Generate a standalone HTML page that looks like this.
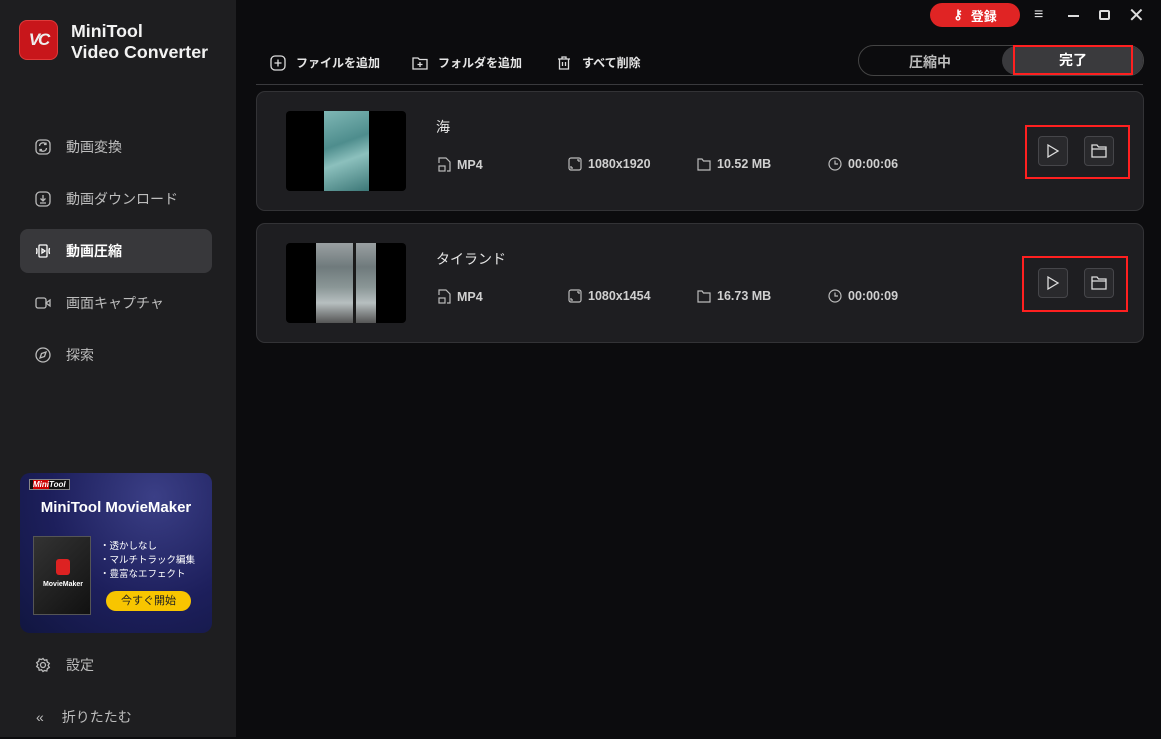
<!DOCTYPE html>
<html><head><meta charset="utf-8"><style>
*{margin:0;padding:0;box-sizing:border-box}
body{width:1161px;height:737px;background:#0c0c0e;font-family:"Liberation Sans","Noto Sans CJK JP",sans-serif;color:#ddd;position:relative;overflow:hidden;font-size:13px}
.side{position:absolute;left:0;top:0;width:236px;height:737px;background:#1e1e20}
.logo{position:absolute;left:19px;top:20px;width:39px;height:40px;border-radius:8px;background:#c8161b;border:1px solid #e03a3a;color:#eee;font-weight:bold;font-style:italic;font-size:17px;text-align:center;line-height:38px;letter-spacing:-2px}
.title{position:absolute;left:71px;top:21px;font-weight:bold;font-size:17.8px;line-height:21px;color:#f2f2f2}
.nav{position:absolute;left:20px;width:192px;height:44px;border-radius:8px;display:flex;align-items:center;font-size:14px;color:#bdbdbd}
.nav.act{background:#38383b;color:#fff;font-weight:bold}
.nav svg{margin-left:15px;margin-right:15px}
.ad{position:absolute;left:20px;top:473px;width:192px;height:160px;border-radius:10px;background:radial-gradient(ellipse at 70% 15%,#3b3f86,#1d1f5c 55%,#111640);overflow:hidden}
.main .tb{position:absolute;top:54px;display:flex;align-items:center;font-size:12px;color:#e6e6e6;font-weight:bold}
.tb svg{margin-right:10px}
.card{position:absolute;left:256px;width:888px;height:120px;background:#1e1e21;border:1px solid #333336;border-radius:9px}
.thumb{position:absolute;left:29px;top:19px;width:120px;height:80px;background:#000;border-radius:4px;overflow:hidden}
.name{position:absolute;left:179px;top:25px;font-size:14px;color:#e5e5e5}
.meta{position:absolute;top:65px;display:flex;align-items:center;font-size:12.5px;color:#d0d0d0;font-weight:bold}
.meta svg{margin-right:6px}
.btn{position:absolute;width:30px;height:30px;border:1px solid #46464a;border-radius:4px;background:#29292c;display:flex;align-items:center;justify-content:center}
.red{position:absolute;border:2px solid #ff2020}
</style></head><body>
<div class="side">
 <div class="logo">VC</div>
 <div class="title">MiniTool<br>Video Converter</div>
 <div class="nav" style="top:125px"><svg width="16" height="16" viewBox="0 0 16 16" fill="none" stroke="#bbb" stroke-width="1.3"><rect x="1" y="1" width="14" height="14" rx="4"/><path d="M4.5 7a3.5 3.5 0 0 1 6.5-1.5M11.5 9a3.5 3.5 0 0 1-6.5 1.5M11 3.5v2H9M5 12.5v-2h2"/></svg>動画変換</div>
 <div class="nav" style="top:177px"><svg width="16" height="16" viewBox="0 0 16 16" fill="none" stroke="#bbb" stroke-width="1.3"><rect x="1" y="1" width="14" height="14" rx="4"/><path d="M8 4v6M5.5 7.5 8 10l2.5-2.5M5 12h6"/></svg>動画ダウンロード</div>
 <div class="nav act" style="top:229px"><svg width="16" height="16" viewBox="0 0 16 16" fill="none" stroke="#fff" stroke-width="1.3"><rect x="4" y="2" width="8" height="12" rx="1"/><path d="M7 6v4l3-2zM1.5 5q1 3 0 6M14.5 5q-1 3 0 6"/></svg>動画圧縮</div>
 <div class="nav" style="top:281px"><svg width="16" height="16" viewBox="0 0 16 16" fill="none" stroke="#bbb" stroke-width="1.3"><rect x="1" y="3" width="10" height="10" rx="2"/><path d="M11 8l4-3v6z"/></svg>画面キャプチャ</div>
 <div class="nav" style="top:333px"><svg width="16" height="16" viewBox="0 0 16 16" fill="none" stroke="#bbb" stroke-width="1.3"><circle cx="8" cy="8" r="7"/><path d="M11 5 9.5 9.5 5 11 6.5 6.5z"/></svg>探索</div>
 <div class="ad">
  <div style="position:absolute;left:9px;top:6px;background:#111;border:1px solid #888;color:#fff;font-size:8px;font-weight:bold;font-style:italic;padding:0 3px;line-height:9px"><span style="background:#c00">Mini</span>Tool</div>
  <div style="position:absolute;left:0;width:192px;top:26px;text-align:center;color:#fff;font-weight:bold;font-size:15px">MiniTool MovieMaker</div>
  <div style="position:absolute;left:13px;top:63px;width:58px;height:79px;background:linear-gradient(135deg,#333,#111);border:1px solid #555"><div style="position:absolute;left:22px;top:22px;width:14px;height:16px;background:#d22;border-radius:3px"></div><div style="position:absolute;left:0;width:58px;top:44px;text-align:center;font-size:7px;color:#fff;font-weight:bold">MovieMaker</div></div>
  <div style="position:absolute;left:80px;top:67px;color:#fff;font-size:9.5px;line-height:14px">・透かしなし<br>・マルチトラック編集<br>・豊富なエフェクト</div>
  <div style="position:absolute;left:86px;top:118px;width:85px;height:20px;border-radius:10px;background:#f8c500;color:#222;font-size:11px;text-align:center;line-height:20px">今すぐ開始</div>
 </div>
 <div class="nav" style="top:643px"><svg width="16" height="16" viewBox="0 0 16 16" fill="none" stroke="#bbb" stroke-width="1.3"><circle cx="8" cy="8" r="2.5"/><path d="M8 1.5l1.5 1.8 2.3-.5.5 2.3 2 1.3-1.2 2 1.2 2-2 1.3-.5 2.3-2.3-.5L8 14.5l-1.5-1.8-2.3.5-.5-2.3-2-1.3 1.2-2-1.2-2 2-1.3.5-2.3 2.3.5z"/></svg>設定</div>
 <div class="nav" style="top:695px"><span style="margin-left:16px;margin-right:18px;font-size:14px">«</span>折りたたむ</div>
</div>

<div class="main">
 <div style="position:absolute;left:930px;top:3px;width:90px;height:24px;border-radius:12px;background:#e02424;color:#fff;font-size:13px;font-weight:bold;display:flex;align-items:center;justify-content:center"><span style="margin-right:8px">⚷</span>登録</div>
 <div style="position:absolute;left:1034px;top:6px;color:#ddd;font-size:16px">≡</div>
 <div style="position:absolute;left:1068px;top:15px;width:11px;height:2px;background:#ddd"></div>
 <div style="position:absolute;left:1099px;top:10px;width:11px;height:10px;border:2px solid #ddd;border-radius:2px"></div>
 <div style="position:absolute;left:1128px;top:3px;color:#ddd;font-size:20px">✕</div>

 <div class="tb" style="left:270px"><svg width="16" height="16" viewBox="0 0 16 16" fill="none" stroke="#ddd" stroke-width="1.3"><rect x="1" y="1" width="14" height="14" rx="4"/><path d="M8 4.5v7M4.5 8h7"/></svg>ファイルを追加</div>
 <div class="tb" style="left:412px"><svg width="16" height="16" viewBox="0 0 16 16" fill="none" stroke="#ddd" stroke-width="1.3"><path d="M1 3h5l1.5 1.5H15V14H1z"/><path d="M8 7v5M5.5 9.5h5"/></svg>フォルダを追加</div>
 <div class="tb" style="left:556px"><svg width="16" height="16" viewBox="0 0 16 16" fill="none" stroke="#ddd" stroke-width="1.3"><path d="M2 4h12M6 4V2h4v2M3.5 4v10h9V4M6.5 7v4M9.5 7v4"/></svg>すべて削除</div>
 <div style="position:absolute;left:256px;top:84px;width:887px;height:1px;background:#3a3a3d"></div>
 <div style="position:absolute;left:858px;top:45px;width:286px;height:31px;border:1px solid #444;border-radius:16px"></div>
 <div style="position:absolute;left:1002px;top:46px;width:141px;height:29px;border-radius:15px;background:#3a3a3d"></div>
 <div style="position:absolute;left:858px;top:52px;width:144px;text-align:center;color:#bbb;font-weight:bold;font-size:14px">圧縮中</div>
 <div style="position:absolute;left:1013px;top:45px;width:120px;height:30px;border:2px solid #ff2020;color:#fff;font-weight:bold;font-size:14px;text-align:center;line-height:26px">完了</div>

 <div class="card" style="top:91px">
  <div class="thumb"><div style="position:absolute;left:38px;top:0;width:45px;height:80px;background:linear-gradient(160deg,#7fb7b5,#4e8d8d 40%,#8cc0bd 60%,#3c7777)"></div></div>
  <div class="name">海</div>
  <div class="meta" style="left:181px"><svg width="13" height="15" viewBox="0 0 13 15" fill="none" stroke="#bbb" stroke-width="1.2"><path d="M1 6V1h7l4 4v9h-3"/><rect x="1" y="9" width="6" height="5"/></svg>MP4</div>
  <div class="meta" style="left:311px"><svg width="14" height="14" viewBox="0 0 14 14" fill="none" stroke="#bbb" stroke-width="1.2"><rect x="1" y="1" width="12" height="12" rx="2"/><path d="M3 9v2h2M11 5V3H9"/></svg>1080x1920</div>
  <div class="meta" style="left:440px"><svg width="14" height="13" viewBox="0 0 14 13" fill="none" stroke="#bbb" stroke-width="1.2"><path d="M1 1h4l1.5 2H13v9H1z"/></svg>10.52 MB</div>
  <div class="meta" style="left:571px"><svg width="14" height="14" viewBox="0 0 14 14" fill="none" stroke="#bbb" stroke-width="1.2"><circle cx="7" cy="7" r="6"/><path d="M7 3.5V7h3"/></svg>00:00:06</div>
  <div class="btn" style="left:781px;top:44px"><svg width="14" height="16" viewBox="0 0 14 16" fill="none" stroke="#ddd" stroke-width="1.3"><path d="M2 2l10 6-10 6z"/></svg></div>
  <div class="btn" style="left:827px;top:44px"><svg width="16" height="14" viewBox="0 0 16 14" fill="none" stroke="#ddd" stroke-width="1.3"><path d="M1 1h5l1.5 2H15v10H1zM1 5h14"/></svg></div>
 </div>
 <div class="red" style="left:1025px;top:125px;width:105px;height:54px"></div>

 <div class="card" style="top:223px">
  <div class="thumb"><div style="position:absolute;left:30px;top:0;width:60px;height:80px;background:linear-gradient(180deg,#9aa0a2 0%,#6f7a7c 30%,#8a9696 55%,#b7bfc0 75%,#555 100%)"><div style="position:absolute;left:37px;top:0;width:3px;height:80px;background:#1a1a1a"></div></div></div>
  <div class="name">タイランド</div>
  <div class="meta" style="left:181px;top:65px"><svg width="13" height="15" viewBox="0 0 13 15" fill="none" stroke="#bbb" stroke-width="1.2"><path d="M1 6V1h7l4 4v9h-3"/><rect x="1" y="9" width="6" height="5"/></svg>MP4</div>
  <div class="meta" style="left:311px"><svg width="14" height="14" viewBox="0 0 14 14" fill="none" stroke="#bbb" stroke-width="1.2"><rect x="1" y="1" width="12" height="12" rx="2"/><path d="M3 9v2h2M11 5V3H9"/></svg>1080x1454</div>
  <div class="meta" style="left:440px"><svg width="14" height="13" viewBox="0 0 14 13" fill="none" stroke="#bbb" stroke-width="1.2"><path d="M1 1h4l1.5 2H13v9H1z"/></svg>16.73 MB</div>
  <div class="meta" style="left:571px"><svg width="14" height="14" viewBox="0 0 14 14" fill="none" stroke="#bbb" stroke-width="1.2"><circle cx="7" cy="7" r="6"/><path d="M7 3.5V7h3"/></svg>00:00:09</div>
  <div class="btn" style="left:781px;top:44px"><svg width="14" height="16" viewBox="0 0 14 16" fill="none" stroke="#ddd" stroke-width="1.3"><path d="M2 2l10 6-10 6z"/></svg></div>
  <div class="btn" style="left:827px;top:44px"><svg width="16" height="14" viewBox="0 0 16 14" fill="none" stroke="#ddd" stroke-width="1.3"><path d="M1 1h5l1.5 2H15v10H1zM1 5h14"/></svg></div>
 </div>
 <div class="red" style="left:1022px;top:256px;width:106px;height:56px"></div>
</div>
</body></html>
